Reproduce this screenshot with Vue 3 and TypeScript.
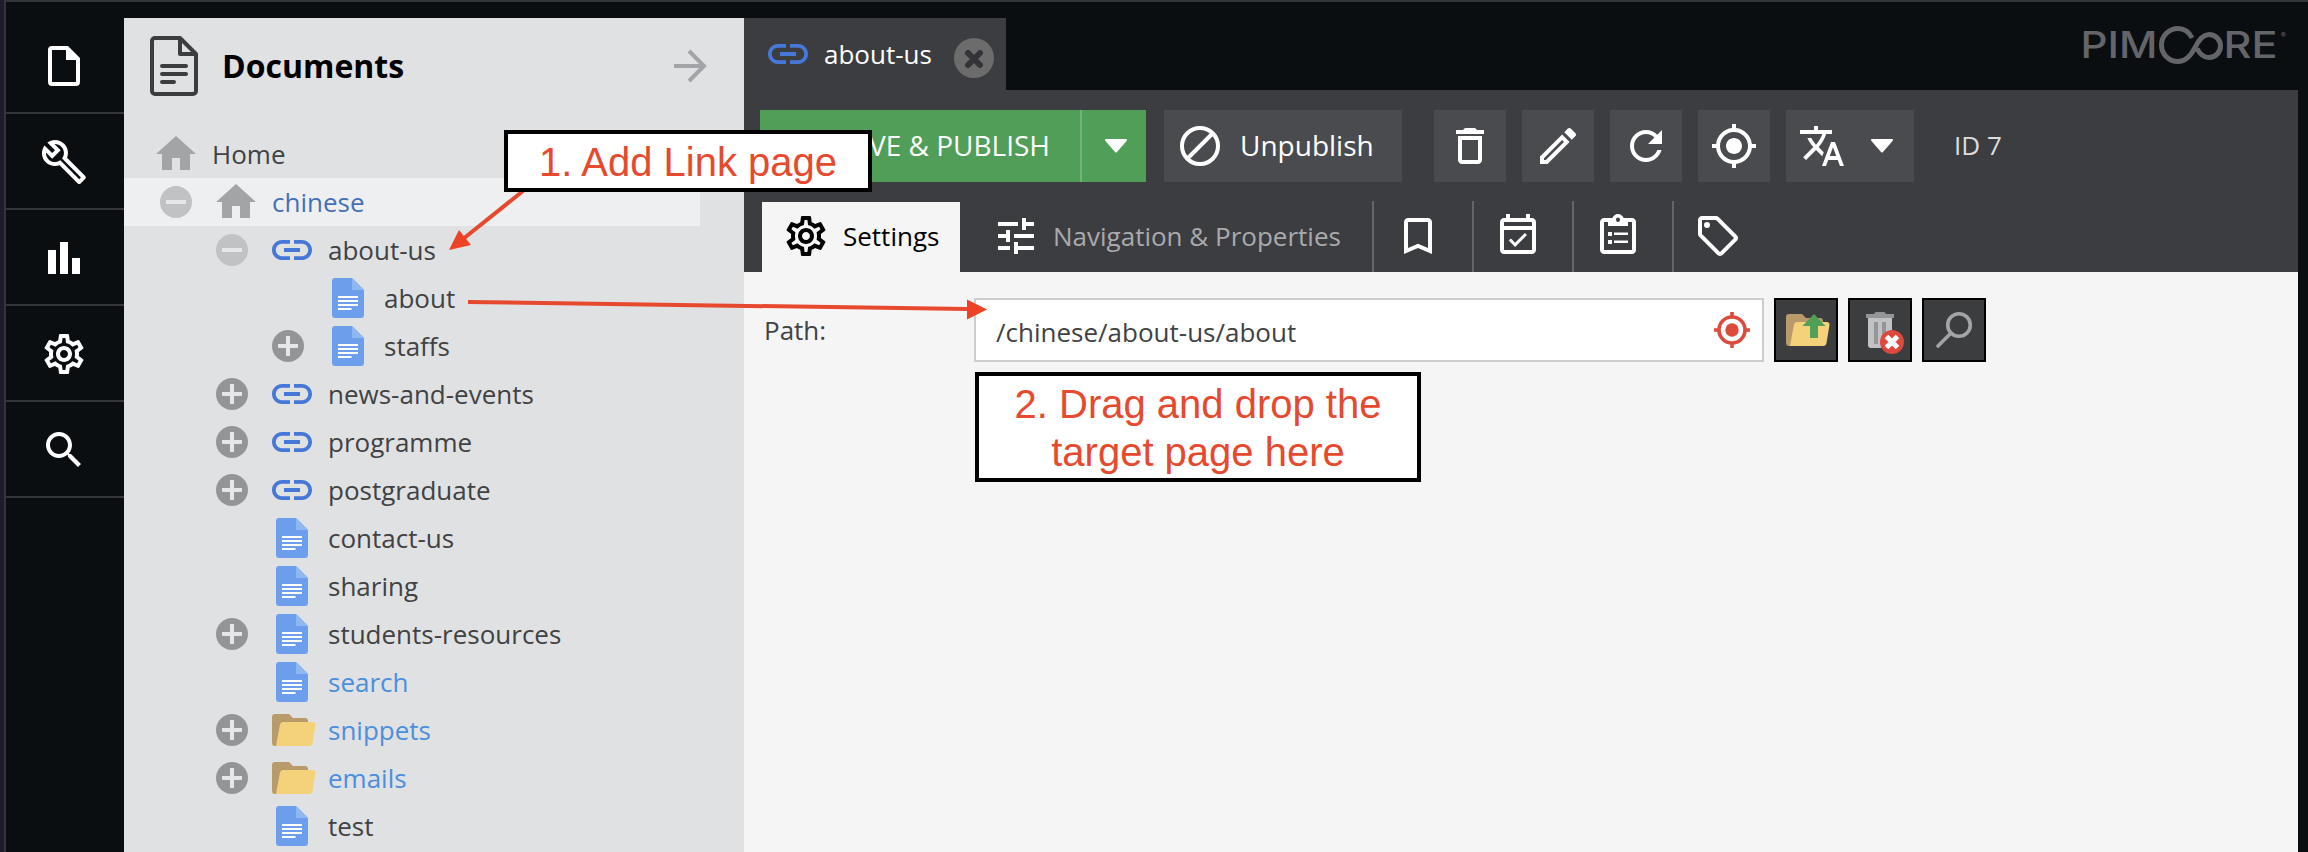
<script setup lang="ts">
interface TreeNode {
  label: string
  icon: 'home' | 'link' | 'page' | 'folder'
  level: number
  toggle?: 'plus' | 'minus'
  tone?: 'accent' | 'selected'
}

const nodes: TreeNode[] = [
  { label: 'Home', icon: 'home', level: 0 },
  { label: 'chinese', icon: 'home', level: 1, toggle: 'minus', tone: 'selected' },
  { label: 'about-us', icon: 'link', level: 2, toggle: 'minus' },
  { label: 'about', icon: 'page', level: 3 },
  { label: 'staffs', icon: 'page', level: 3, toggle: 'plus' },
  { label: 'news-and-events', icon: 'link', level: 2, toggle: 'plus' },
  { label: 'programme', icon: 'link', level: 2, toggle: 'plus' },
  { label: 'postgraduate', icon: 'link', level: 2, toggle: 'plus' },
  { label: 'contact-us', icon: 'page', level: 2 },
  { label: 'sharing', icon: 'page', level: 2 },
  { label: 'students-resources', icon: 'page', level: 2, toggle: 'plus' },
  { label: 'search', icon: 'page', level: 2, tone: 'accent' },
  { label: 'snippets', icon: 'folder', level: 2, toggle: 'plus', tone: 'accent' },
  { label: 'emails', icon: 'folder', level: 2, toggle: 'plus', tone: 'accent' },
  { label: 'test', icon: 'page', level: 2 },
]

const paths = {
  file: 'M6 2h8l6 6v12a2 2 0 0 1-2 2H6a2 2 0 0 1-2-2V4a2 2 0 0 1 2-2zM6 4v16h12V9h-5V4z',
  wrench:
    'M22.61 18.99l-9.08-9.08c.93-2.34.45-5.1-1.44-7C9.79.61 6.21.4 3.66 2.26L7.5 6.11 6.08 7.52 2.25 3.69C.39 6.23.6 9.82 2.9 12.11c1.86 1.86 4.57 2.35 6.89 1.48l9.11 9.11c.39.39 1.02.39 1.41 0l2.3-2.3c.4-.38.4-1.01 0-1.41zm-3 1.6l-9.46-9.46c-.61.45-1.29.72-2 .82-1.36.2-2.79-.21-3.83-1.25C3.37 9.76 2.93 8.5 3 7.26l3.09 3.09 4.24-4.24-3.09-3.09c1.24-.07 2.49.37 3.44 1.31 1.08 1.08 1.49 2.57 1.24 3.96-.12.71-.42 1.37-.88 1.96l9.45 9.45-.88.89z',
  chart: 'M4 8h4v12H4zM10 4h4v16h-4zM16 12h4v8h-4z',
  gear: 'M19.43 12.98c.04-.32.07-.64.07-.98 0-.34-.03-.66-.07-.98l2.11-1.65c.19-.15.24-.42.12-.64l-2-3.46c-.09-.16-.26-.25-.44-.25-.06 0-.12.01-.17.03l-2.49 1c-.52-.4-1.08-.73-1.69-.98l-.38-2.65C14.46 2.18 14.25 2 14 2h-4c-.25 0-.46.18-.49.42l-.38 2.65c-.61.25-1.17.59-1.69.98l-2.49-1c-.06-.02-.12-.03-.18-.03-.17 0-.34.09-.43.25l-2 3.46c-.13.22-.07.49.12.64l2.11 1.65c-.04.32-.07.65-.07.98 0 .33.03.66.07.98l-2.11 1.65c-.19.15-.24.42-.12.64l2 3.46c.09.16.26.25.44.25.06 0 .12-.01.17-.03l2.49-1c.52.4 1.08.73 1.69.98l.38 2.65c.03.24.24.42.49.42h4c.25 0 .46-.18.49-.42l.38-2.65c.61-.25 1.17-.59 1.69-.98l2.49 1c.06.02.12.03.18.03.17 0 .34-.09.43-.25l2-3.46c.12-.22.07-.49-.12-.64l-2.11-1.65zm-1.98-1.71c.04.31.05.52.05.73 0 .21-.02.43-.05.73l-.14 1.13.89.7 1.08.84-.7 1.21-1.27-.51-1.04-.42-.9.68c-.43.32-.84.56-1.25.73l-1.06.43-.16 1.13-.2 1.35h-1.4l-.19-1.35-.16-1.13-1.06-.43c-.43-.18-.83-.41-1.23-.71l-.91-.7-1.06.43-1.27.51-.7-1.21 1.08-.84.89-.7-.14-1.13c-.03-.31-.05-.54-.05-.74s.02-.43.05-.73l.14-1.13-.89-.7-1.08-.84.7-1.21 1.27.51 1.04.42.9-.68c.43-.32.84-.56 1.25-.73l1.06-.43.16-1.13.2-1.35h1.39l.19 1.35.16 1.13 1.06.43c.43.18.83.41 1.23.71l.91.7 1.06-.43 1.27-.51.7 1.21-1.07.85-.89.7.14 1.13zM12 8c-2.21 0-4 1.79-4 4s1.79 4 4 4 4-1.79 4-4-1.79-4-4-4zm0 6c-1.1 0-2-.9-2-2s.9-2 2-2 2 .9 2 2-.9 2-2 2z',
  search:
    'M15.5 14h-.79l-.28-.27C15.41 12.59 16 11.11 16 9.5 16 5.91 13.09 3 9.5 3S3 5.91 3 9.5 5.91 16 9.5 16c1.61 0 3.09-.59 4.23-1.57l.27.28v.79l5 4.99L20.49 19l-4.99-5zm-6 0C7.01 14 5 11.99 5 9.5S7.01 5 9.5 5 14 7.01 14 9.5 11.99 14 9.5 14z',
  link: 'M3.9 12c0-1.71 1.39-3.1 3.1-3.1h4V7H7c-2.76 0-5 2.24-5 5s2.24 5 5 5h4v-1.9H7c-1.71 0-3.1-1.39-3.1-3.1zM8 13h8v-2H8v2zm9-6h-4v1.9h4c1.71 0 3.1 1.39 3.1 3.1s-1.39 3.1-3.1 3.1h-4V17h4c2.76 0 5-2.24 5-5s-2.24-5-5-5z',
  trash:
    'M6 19c0 1.1.9 2 2 2h8c1.1 0 2-.9 2-2V7H6v12zM8 9h8v10H8V9zm7.5-5l-1-1h-5l-1 1H5v2h14V4z',
  edit: 'M14.06 9.02l.92.92L5.92 19H5v-.92l9.06-9.06M17.66 3c-.25 0-.51.1-.7.29l-1.83 1.83 3.75 3.75 1.83-1.83c.39-.39.39-1.02 0-1.41l-2.34-2.34c-.2-.2-.45-.29-.71-.29zm-3.6 3.19L3 17.25V21h3.75L17.81 9.94l-3.75-3.75z',
  reload:
    'M17.65 6.35C16.2 4.9 14.21 4 12 4c-4.42 0-7.99 3.58-7.99 8s3.57 8 7.99 8c3.73 0 6.84-2.55 7.73-6h-2.08c-.82 2.33-3.04 4-5.65 4-3.31 0-6-2.69-6-6s2.69-6 6-6c1.66 0 3.14.69 4.22 1.78L13 11h7V4l-2.35 2.35z',
  locate:
    'M12 8c-2.21 0-4 1.79-4 4s1.79 4 4 4 4-1.79 4-4-1.79-4-4-4zm8.94 3c-.46-4.17-3.77-7.48-7.94-7.94V1h-2v2.06C6.83 3.52 3.52 6.83 3.06 11H1v2h2.06c.46 4.17 3.77 7.48 7.94 7.94V23h2v-2.06c4.17-.46 7.48-3.77 7.94-7.94H23v-2h-2.06zM12 19c-3.87 0-7-3.13-7-7s3.13-7 7-7 7 3.13 7 7-3.13 7-7 7z',
  translate:
    'M12.87 15.07l-2.54-2.51.03-.03c1.74-1.94 2.98-4.17 3.71-6.53H17V4h-7V2H8v2H1v1.99h11.17C11.5 7.92 10.44 9.75 9 11.35 8.07 10.32 7.3 9.19 6.69 8h-2c.73 1.63 1.73 3.17 2.98 4.56l-5.09 5.02L4 19l5-5 3.11 3.11.76-2.04zM18.5 10h-2L12 22h2l1.12-3h4.75L21 22h2l-4.5-12zm-2.62 7l1.62-4.33L19.12 17h-3.24z',
  tune: 'M3 17v2h6v-2H3zM3 5v2h10V5H3zm10 16v-2h8v-2h-8v-2h-2v6h2zM7 9v2H3v2h4v2h2V9H7zm14 4v-2H11v2h10zm-6-4h2V7h4V5h-4V3h-2v6z',
  bookmark:
    'M17 3H7c-1.1 0-1.99.9-1.99 2L5 21l7-3 7 3V5c0-1.1-.9-2-2-2zm0 15l-5-2.18L7 18V5h10v13z',
  calendar:
    'M19 3h-1V1h-2v2H8V1H6v2H5c-1.1 0-2 .9-2 2v14c0 1.1.9 2 2 2h14c1.1 0 2-.9 2-2V5c0-1.1-.9-2-2-2zm0 16H5V9h14v10zM5 7V5h14v2H5zM10.56 17.46l5.93-5.93-1.06-1.06-4.87 4.87-2.11-2.11-1.06 1.06z',
  clipboard:
    'M19 3h-4.18C14.4 1.84 13.3 1 12 1s-2.4.84-2.82 2H5c-1.1 0-2 .9-2 2v14c0 1.1.9 2 2 2h14c1.1 0 2-.9 2-2V5c0-1.1-.9-2-2-2zm-7-.2a1 1.1 0 1 1 0 2.2 1 1.1 0 1 1 0-2.2zM19 19H5V5h2v2h10V5h2zM7 10h2v2H7zM10 10.2h7v1.3h-7zM7 14h2v2H7zM10 14.2h7v1.3h-7z',
  tag: 'M21.41 11.58l-9-9C12.05 2.22 11.55 2 11 2H4c-1.1 0-2 .9-2 2v7c0 .55.22 1.05.59 1.42l9 9c.36.36.86.58 1.41.58s1.05-.22 1.41-.59l7-7c.37-.36.59-.86.59-1.41s-.23-1.06-.59-1.42zM13 20.01L4 11V4h7l9 9zM6.5 5a1.5 1.5 0 1 0 0 3 1.5 1.5 0 1 0 0-3z',
}

const rail = [paths.file, paths.wrench, paths.chart, paths.gear, paths.search]
const actions = [paths.trash, paths.edit, paths.reload, paths.locate]
const iconTabs = [paths.bookmark, paths.calendar, paths.clipboard, paths.tag]
</script>

<template>
  <div class="app">
    <div class="edge"></div>
    <nav class="rail">
      <div v-for="(d, i) in rail" :key="i" class="rail-item">
        <svg class="ico" viewBox="0 0 24 24"><path fill-rule="evenodd" :d="d" /></svg>
      </div>
    </nav>

    <aside class="sidebar">
      <header class="side-head">
        <svg class="head-doc" viewBox="0 0 48 60">
          <path d="M5 2h25l16 16v37a3 3 0 0 1-3 3H5a3 3 0 0 1-3-3V5a3 3 0 0 1 3-3zM30 2v16h16M12 30h24M12 38h24M12 46h12" />
        </svg>
        <h1>Documents</h1>
        <svg class="head-arrow" viewBox="0 0 34 34"><path d="M1 17h30M16 2l15 15-15 15" /></svg>
      </header>
      <ul class="tree">
        <li
          v-for="n in nodes"
          :key="n.label"
          class="row"
          :class="['level-' + n.level, n.tone]"
        >
          <span v-if="n.level > 0" class="slot">
            <svg v-if="n.toggle" class="toggle" :class="n.toggle" viewBox="0 0 32 32">
              <circle cx="16" cy="16" r="16" />
              <path :d="n.toggle === 'plus' ? 'M6 16h20M16 6v20' : 'M6 16h20'" />
            </svg>
          </span>
          <span class="pic">
            <svg v-if="n.icon === 'home'" class="home" viewBox="0 0 40 34">
              <path d="M20 0l20 18h-6v16H24V22h-8v12H6V18H0z" />
            </svg>
            <svg v-else-if="n.icon === 'link'" class="ico link" viewBox="0 0 24 24">
              <path :d="paths.link" />
            </svg>
            <svg v-else-if="n.icon === 'page'" class="page" viewBox="0 0 32 40">
              <path fill="#6d9eeb" d="M3 0h17l12 12v25a3 3 0 0 1-3 3H3a3 3 0 0 1-3-3V3a3 3 0 0 1 3-3z" />
              <path fill="#8fb8f2" d="M20 0l12 12H20z" />
              <path fill="#fff" d="M6 18h20v2H6zM6 22h20v2H6zM6 26h20v2H6zM6 30h13.5v2H6z" />
            </svg>
            <svg v-else class="folder" viewBox="0 0 44 32">
              <path fill="#b99a6b" d="M3 0h14l4 4h12a3 3 0 0 1 3 3v25H3a3 3 0 0 1-3-3V3a3 3 0 0 1 3-3z" />
              <path fill="#f3d27a" d="M11 8h30a2.500 2.500 0 0 1 2.500 3l-3 18a3.500 3.500 0 0 1-3.500 3H4L8 10.500A3 3 0 0 1 11 8z" />
            </svg>
          </span>
          <span class="label">{{ n.label }}</span>
        </li>
      </ul>
    </aside>

    <main class="editor">
      <div class="topbar">
        <div class="doc-tab">
          <svg class="ico link" viewBox="0 0 24 24"><path :d="paths.link" /></svg>
          <span>about-us</span>
          <svg class="close" viewBox="0 0 40 40">
            <circle cx="20" cy="20" r="20" />
            <path d="M14 15l12 12M26 15L14 27" />
          </svg>
        </div>
        <svg class="logo" viewBox="-6 -7 216 54">
          <text x="-2.500" y="33.200" textLength="77" lengthAdjust="spacingAndGlyphs">PIM</text>
          <path d="M109 13C106 7 102 3.500 95 3.500a16.300 16.300 0 0 0 0 33c8 0 13-6 17-14s8-13 14-13a11.500 11.500 0 0 1 0 23c-5 0-9-3-12-9" />
          <text x="140.500" y="33.200" textLength="54" lengthAdjust="spacingAndGlyphs">RE</text>
          <text class="reg" x="198" y="13">®</text>
        </svg>
      </div>

      <div class="panel">
        <div class="toolbar">
          <div class="publish">
            <span class="publish-main">SAVE &amp; PUBLISH</span>
            <span class="publish-menu">
              <svg class="caret" viewBox="0 0 24 14"><path d="M2 1h20L12 12.500z" /></svg>
            </span>
          </div>
          <div class="btn unpublish">
            <svg class="ico ban" viewBox="0 0 48 48"><path d="M24 6a18 18 0 1 0 0 36 18 18 0 1 0 0-36zM11 37L37 11" /></svg>
            <span>Unpublish</span>
          </div>
          <div class="actions">
            <div v-for="(d, i) in actions" :key="i" class="btn square">
              <svg class="ico" viewBox="0 0 24 24"><path :d="d" /></svg>
            </div>
            <div class="btn lang">
              <svg class="ico" viewBox="0 0 24 24"><path :d="paths.translate" /></svg>
              <svg class="caret" viewBox="0 0 24 14"><path d="M2 1h20L12 12.500z" /></svg>
            </div>
          </div>
          <span class="doc-id">ID 7</span>
        </div>
        <div class="tabs">
          <div class="tab active">
            <svg class="ico" viewBox="0 0 24 24"><path :d="paths.gear" /></svg>
            <span>Settings</span>
          </div>
          <div class="tab nav">
            <svg class="ico" viewBox="0 0 24 24"><path :d="paths.tune" /></svg>
            <span>Navigation &amp; Properties</span>
          </div>
          <div v-for="(d, i) in iconTabs" :key="i" class="tab icon-only">
            <svg class="ico" viewBox="0 0 24 24"><path fill-rule="evenodd" :d="d" /></svg>
          </div>
        </div>
        <section class="content">
          <div class="field-row">
            <label>Path:</label>
            <div class="field">
              <span>/chinese/about-us/about</span>
              <svg class="target" viewBox="0 0 36 36">
                <circle cx="18" cy="18" r="13" />
                <circle class="dot" cx="18" cy="18" r="6.700" />
                <path d="M18 0v5M18 31v5M0 18h5M31 18h5" />
              </svg>
            </div>
            <div class="field-btn">
              <svg viewBox="0 0 60 60">
                <path fill="#b99a6b" d="M13 14h13l4 4h14a3 3 0 0 1 3 3v25H13a3 3 0 0 1-3-3V17a3 3 0 0 1 3-3z" />
                <path fill="#f3d27a" d="M21 22h30a2.500 2.500 0 0 1 2.500 3l-3 18a3.500 3.500 0 0 1-3.500 3H14l4-21.500A3 3 0 0 1 21 22z" />
                <path fill="#50a057" d="M38 14l11.500 12H42v12h-8V26h-7.500z" />
              </svg>
            </div>
            <div class="field-btn">
              <svg viewBox="0 0 60 60">
                <path fill="#c1c2c4" d="M18 18h24v27a3 3 0 0 1-3 3H21a3 3 0 0 1-3-3z" />
                <path fill="#949597" d="M16 14h8l1.500-2h9l1.500 2h8v4H16zM24 22h4v22h-4zM32 22h4v22h-4z" />
                <circle cx="42" cy="42" r="12" fill="#dc4a3d" />
                <path class="cross" d="M36.500 36.500l11 11M47.500 36.500l-11 11" />
              </svg>
            </div>
            <div class="field-btn">
              <svg class="lens" viewBox="0 0 60 60">
                <circle cx="35" cy="25" r="11.300" />
                <path d="M27 33L14 46" />
              </svg>
            </div>
          </div>
        </section>
      </div>
    </main>

    <svg class="arrows" viewBox="0 0 2308 852">
      <path class="shaft" d="M523 191L463 239" />
      <path class="head" d="M449 250l10-20 12 15z" />
      <path class="shaft" d="M468 302L968 309" />
      <path class="head" d="M987 309.500l-20-10v20z" />
    </svg>
    <div class="callout first">1. Add Link page</div>
    <div class="callout second"><span>2. Drag and drop the</span><span class="line-b">target page here</span></div>
  </div>
</template>

<style>
body {
  margin: 0;
  background: #0b0e11;
}
</style>

<style scoped>
.app {
  position: relative;
  display: flex;
  width: 2308px;
  height: 852px;
  overflow: hidden;
  background: #0b0e11;
  font-family: 'Open Sans', 'Noto Sans', sans-serif;
  font-size: 26px;
  color: #404244;
  box-sizing: border-box;
}
.app * {
  box-sizing: border-box;
}
svg {
  display: block;
  flex: none;
}
.ico {
  width: 48px;
  height: 48px;
  fill: #fff;
}
.ico.link {
  fill: #4678d8;
}
.edge {
  width: 4px;
  flex: none;
  background: #1d1c28;
}
.rail {
  width: 120px;
  flex: none;
  padding-top: 16px;
  border-top: 2px solid #34353a;
  border-left: 2px solid #34353a;
}
.rail-item {
  display: flex;
  align-items: center;
  height: 96px;
  padding-left: 34px;
  box-shadow: inset 0 -2px #34353a;
}

.sidebar {
  width: 620px;
  flex: none;
  border-top: 2px solid #34353a;
  padding-top: 16px;
  background: #e0e1e3 content-box;
}
.side-head {
  display: flex;
  align-items: center;
  height: 96px;
  padding: 0 37px 0 26px;
  margin-bottom: 16px;
}
.head-doc {
  width: 48px;
  height: 60px;
  fill: none;
  stroke: #3c3d3f;
  stroke-width: 4;
  stroke-linejoin: round;
  stroke-linecap: round;
}
.side-head h1 {
  margin: 0 auto 0 24px;
  font-size: 32px;
  line-height: 48px;
  font-weight: 700;
  color: #000;
}
.head-arrow {
  width: 34px;
  height: 34px;
  fill: none;
  stroke: #a3a4a8;
  stroke-width: 4;
}
.tree {
  list-style: none;
  margin: 0;
  padding: 0;
}
.row {
  display: flex;
  align-items: center;
  width: 576px;
  height: 48px;
  line-height: 48px;
}
.level-0,
.level-1 {
  padding-left: 28px;
}
.level-2 {
  padding-left: 84px;
}
.level-3 {
  padding-left: 140px;
}
.slot {
  display: flex;
  width: 60px;
  padding-left: 8px;
}
.toggle {
  width: 32px;
  height: 32px;
  stroke: #e6e7e9;
  stroke-width: 4;
}
.toggle circle {
  stroke: none;
}
.plus {
  fill: #949597;
}
.minus {
  fill: #c1c2c4;
}
.pic {
  display: flex;
  justify-content: center;
  width: 48px;
  margin-right: 12px;
}
.home {
  width: 40px;
  height: 34px;
  margin-bottom: 2px;
  fill: #a3a4a6;
}
.page {
  width: 32px;
  height: 40px;
}
.folder {
  width: 44px;
  height: 32px;
  margin-left: 4px;
}
.label {
  white-space: nowrap;
}
.selected {
  background: #eeeff1;
}
.selected .label {
  color: #4470b6;
}
.accent .label {
  color: #4b8fdc;
}

.editor {
  display: flex;
  flex-direction: column;
  width: 1564px;
  border-top: 2px solid #34353a;
}
.topbar {
  display: flex;
  justify-content: space-between;
  height: 88px;
  padding: 16px 15px 0 0;
}
.doc-tab {
  display: flex;
  align-items: center;
  width: 262px;
  height: 72px;
  padding: 0 0 0 20px;
  background: #3c3d41;
  color: #fff;
}
.doc-tab span {
  flex: 1;
  margin-left: 12px;
}
.doc-tab .close {
  width: 40px;
  height: 40px;
  margin: 8px 12px 0 0;
  fill: #6c6c6d;
}
.doc-tab .close path {
  stroke: #333438;
  stroke-width: 6;
  stroke-linecap: round;
}
.logo {
  width: 216px;
  height: 54px;
  fill: #64656a;
}
.logo text {
  font: 500 37px Inter, 'Open Sans', sans-serif;
}
.logo .reg {
  font-size: 7px;
}
.logo path {
  fill: none;
  stroke: #64656a;
  stroke-width: 5;
}
.panel {
  flex: 1;
  width: 1554px;
  background: #3c3d41;
  padding-top: 20px;
  display: flex;
  flex-direction: column;
}
.toolbar {
  display: flex;
  height: 72px;
  padding-left: 16px;
  font-size: 28px;
  line-height: 70px;
  color: #fff;
}
.publish {
  display: flex;
  width: 386px;
  background: #509e58;
}
.publish-main {
  width: 322px;
  padding-right: 30px;
  text-align: right;
  border-right: 2px solid #74b27a;
}
.publish-menu {
  display: flex;
  flex: 1;
  justify-content: center;
  padding: 29px 0 0 4px;
}
.caret {
  width: 24px;
  height: 14px;
  fill: #fff;
  stroke: #fff;
  stroke-width: 2;
  stroke-linejoin: round;
}
.btn {
  display: flex;
  align-items: center;
  justify-content: center;
  height: 72px;
  background: #4a4b4e;
}
.unpublish {
  width: 238px;
  margin: 0 32px 0 18px;
  padding-left: 12px;
  justify-content: flex-start;
}
.unpublish span {
  height: 72px;
  margin-left: 16px;
}
.ico.ban {
  fill: none;
  stroke: #fff;
  stroke-width: 4;
}
.actions {
  display: flex;
  gap: 16px;
}
.square {
  width: 72px;
}
.lang {
  width: 128px;
  gap: 24px;
  padding-right: 8px;
}
.doc-id {
  margin-left: 40px;
  font-size: 26px;
  color: #dddddf;
}
.tabs {
  display: flex;
  height: 90px;
  padding: 19px 0 0 18px;
  line-height: 68px;
}
.tab {
  display: flex;
  height: 71px;
}
.tab .ico {
  margin-top: 11px;
}
.tab.active {
  width: 198px;
  height: 70px;
  margin-top: 1px;
  padding-left: 20px;
  background: #f5f5f5;
  color: #000;
}
.tab.active .ico {
  margin-top: 10px;
  fill: #000;
}
.tab.active span {
  margin-left: 13px;
}
.tab.nav {
  width: 412px;
  padding-left: 32px;
  color: #a9aaad;
}
.tab.nav span {
  margin: 1px 0 0 13px;
}
.tab.icon-only {
  width: 100px;
  padding-left: 20px;
  border-left: 2px solid #646569;
}
.content {
  flex: 1;
  padding: 26px 0 0 20px;
  background: #f5f5f5;
}
.field-row {
  display: flex;
  height: 64px;
  line-height: 64px;
}
.field-row label {
  width: 210px;
}
.field {
  display: flex;
  justify-content: space-between;
  width: 790px;
  padding: 0 12px 0 20px;
  border: 2px solid #cdcdcd;
  background: #fff;
}
.target {
  width: 36px;
  height: 36px;
  margin-top: 12px;
  fill: none;
  stroke: #db4c3c;
  stroke-width: 3.600;
}
.target .dot {
  fill: #db4c3c;
  stroke: none;
}
.field-btn {
  width: 64px;
  height: 64px;
  margin-left: 10px;
  border: 2px solid #000;
  background: #3c3d3f;
}
.cross {
  stroke: #fff;
  stroke-width: 5;
}
.lens {
  fill: none;
  stroke: #a3a4a6;
  stroke-width: 3.600;
  stroke-linecap: round;
}

.arrows {
  position: absolute;
  inset: 0;
  width: 2308px;
  height: 852px;
}
.shaft {
  fill: none;
  stroke: #e6492d;
  stroke-width: 4;
}
.head {
  fill: #ed4224;
}
.callout {
  position: absolute;
  border: 4px solid #000;
  background: #fff;
  color: #e6492d;
  font: 40px/48px 'Liberation Sans', Arial, sans-serif;
  text-align: center;
  white-space: nowrap;
}
.callout span {
  display: block;
}
.first {
  left: 504px;
  top: 130px;
  width: 368px;
  height: 62px;
  padding-top: 4px;
}
.second {
  left: 975px;
  top: 372px;
  width: 446px;
  height: 110px;
  padding-top: 4px;
}
</style>
